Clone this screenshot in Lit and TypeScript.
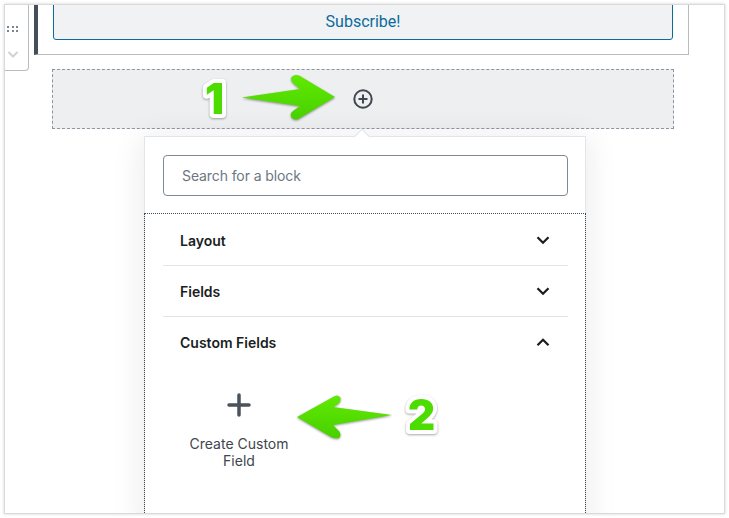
import { html, css, LitElement, svg } from 'lit';
import { customElement } from 'lit/decorators.js';

const chevron = (up: boolean) => html`<svg class="chev" width="24" height="24" viewBox="0 0 24 24">
  <path d=${up ? 'M6.5 15.2 12 9.8 17.5 15.2' : 'M6.5 9.3 12 14.7 17.5 9.3'} fill="none" stroke="#191e23" stroke-width="2.3"></path>
</svg>`;

@customElement('app-root')
export class AppRoot extends LitElement {
  static styles = css`
    :host {
      display: block;
      height: 518px;
      padding: 4px;
      box-sizing: border-box;
      background: #fff;
      font-family: Inter, 'Liberation Sans', sans-serif;
    }

    .frame {
      position: relative;
      width: 721px;
      height: 510px;
      box-sizing: border-box;
      border: 1px solid #dadada;
      box-shadow: 0 0 3px rgba(0, 0, 0, 0.18);
      background: #fff;
      overflow: hidden;
    }

    .toolbar {
      position: absolute;
      left: 0;
      top: -4px;
      width: 23px;
      height: 68px;
      border: 1px solid #b5bcc2;
      border-left: 0;
      border-radius: 0 0 4px 0;
      background: #fff;
    }

    .toolbar svg {
      display: block;
      position: absolute;
      left: 0;
      top: 0;
    }

    .block {
      width: 655px;
      margin-left: 29px;
      box-sizing: border-box;
      border-left: 4px solid #464f59;
      border-right: 1px solid #b5bcc2;
      border-bottom: 1px solid #b5bcc2;
      padding: 0 15px 14px;
    }

    .subscribe {
      height: 38px;
      margin-top: -3px;
      box-sizing: border-box;
      border: 1px solid #0b6b9a;
      border-radius: 3px;
      background: #f1f2f4;
      color: #0a6b9b;
      font-family: Roboto, sans-serif;
      font-size: 16px;
      display: flex;
      align-items: center;
      justify-content: center;
    }

    .appender {
      width: 622px;
      height: 60px;
      margin: 14px 0 0 47px;
      box-sizing: border-box;
      border: 1px dashed #8d96a0;
      background: #eeeff1;
      display: flex;
      align-items: center;
      justify-content: center;
    }

    .popover {
      position: relative;
      width: 442px;
      height: 400px;
      margin: 7px 0 0 139px;
      box-sizing: border-box;
      border: 1px solid #e2e4e7;
      background: #fff;
      box-shadow: 0 3px 30px rgba(25, 30, 35, 0.1);
    }

    .caret {
      position: absolute;
      left: 211px;
      top: -6px;
      width: 11px;
      height: 11px;
      transform: rotate(45deg);
      background: #fff;
      border-left: 1px solid #e2e4e7;
      border-top: 1px solid #e2e4e7;
    }

    .search-wrap {
      position: relative;
      padding: 18px 17px 17px 18px;
    }

    .search {
      height: 41px;
      box-sizing: border-box;
      border: 1px solid #7e8993;
      border-radius: 4px;
      padding-left: 18px;
      display: flex;
      align-items: center;
      color: #6c7781;
      font-size: 14px;
      letter-spacing: -0.1px;
    }

    .results {
      margin: 0 -1px;
      height: 300px;
      box-sizing: border-box;
      border: 1px dotted #3f4a55;
      border-bottom: 0;
      padding: 1px 17px 0 18px;
    }

    .row {
      height: 51px;
      box-sizing: border-box;
      padding: 1px 13px 0 17px;
      border-bottom: 1px solid transparent;
      display: flex;
      align-items: center;
      justify-content: space-between;
      color: #191e23;
      font-size: 14px;
      font-weight: 600;
    }

    .row.sep {
      border-bottom-color: #e2e4e7;
    }

    .chev {
      display: block;
      margin-top: -2px;
    }

    .item {
      width: 118px;
      margin: 25px 0 0 17px;
      display: flex;
      flex-direction: column;
      align-items: center;
      color: #40464d;
      font-size: 14px;
      line-height: 17px;
      text-align: center;
    }

    .item svg {
      display: block;
      margin-bottom: 18px;
    }

    .marks {
      position: absolute;
      left: -5px;
      top: -5px;
      pointer-events: none;
    }

    .marks text {
      font-family: Inter, sans-serif;
      font-size: 42px;
      font-weight: 900;
      fill: #4cdc00;
      stroke: #fff;
      stroke-width: 8px;
      stroke-linejoin: round;
      paint-order: stroke fill;
      filter: drop-shadow(0 1px 1px rgba(0, 0, 0, 0.35));
    }

    .marks .arrow {
      filter: drop-shadow(0 1px 1px rgba(0, 0, 0, 0.4));
    }
  `;

  renderMarks() {
    return html`<svg class="marks" width="729" height="518" viewBox="0 0 729 518">
      <defs>
        <linearGradient id="g" x1="0" y1="0" x2="0" y2="1">
          <stop offset="0" stop-color="#60ea00"></stop>
          <stop offset="1" stop-color="#48d000"></stop>
        </linearGradient>
      </defs>
      ${svg`
        <path class="arrow" fill="url(#g)" d="M242 97.5 300 89 293 83Q289 78 293 76 296 74 300 76L335 97 300 118Q296 121 292 118 289 114 293 111L300 106Z"></path>
        <path class="arrow" fill="url(#g)" d="M297 417 333 397Q337 394 340 397 342 401 338 404L333 407 392 415 333 425 339 431Q342 435 339 438 335 439 331 437Z"></path>
        <text x="205" y="114">1</text>
        <text x="408" y="430">2</text>
      `}
    </svg>`;
  }

  render() {
    return html`
      <div class="frame">
        <div class="block"><div class="subscribe">Subscribe!</div></div>
        <div class="appender">
          <svg width="22" height="22" viewBox="0 0 22 22">
            <circle cx="11" cy="11" r="8.7" fill="none" stroke="#40464d" stroke-width="2"></circle>
            <path d="M11 6.5v9M6.5 11h9" stroke="#40464d" stroke-width="2"></path>
          </svg>
        </div>
        <div class="popover">
          <div class="caret"></div>
          <div class="search-wrap"><div class="search">Search for a block</div></div>
          <div class="results">
            <div class="row sep">Layout ${chevron(false)}</div>
            <div class="row sep">Fields ${chevron(false)}</div>
            <div class="row">Custom Fields ${chevron(true)}</div>
            <div class="item">
              <svg width="24" height="24" viewBox="0 0 24 24">
                <path d="M12 2v20M2 12h20" stroke="#4a525b" stroke-width="3.5" stroke-linecap="round"></path>
              </svg>
              Create Custom Field
            </div>
          </div>
        </div>
        <div class="toolbar">
          <svg width="23" height="68" viewBox="0 0 23 68">
            <g fill="#7b8590">
              <rect x="2" y="24" width="2" height="2"></rect><rect x="7" y="24" width="2" height="2"></rect><rect x="11" y="24" width="2" height="2"></rect>
              <rect x="2" y="28" width="2" height="2"></rect><rect x="7" y="28" width="2" height="2"></rect><rect x="11" y="28" width="2" height="2"></rect>
            </g>
            <path d="M3.5 50 8 54.5 12.5 50" fill="none" stroke="#cfd3d6" stroke-width="2"></path>
          </svg>
        </div>
        ${this.renderMarks()}
      </div>
    `;
  }
}
